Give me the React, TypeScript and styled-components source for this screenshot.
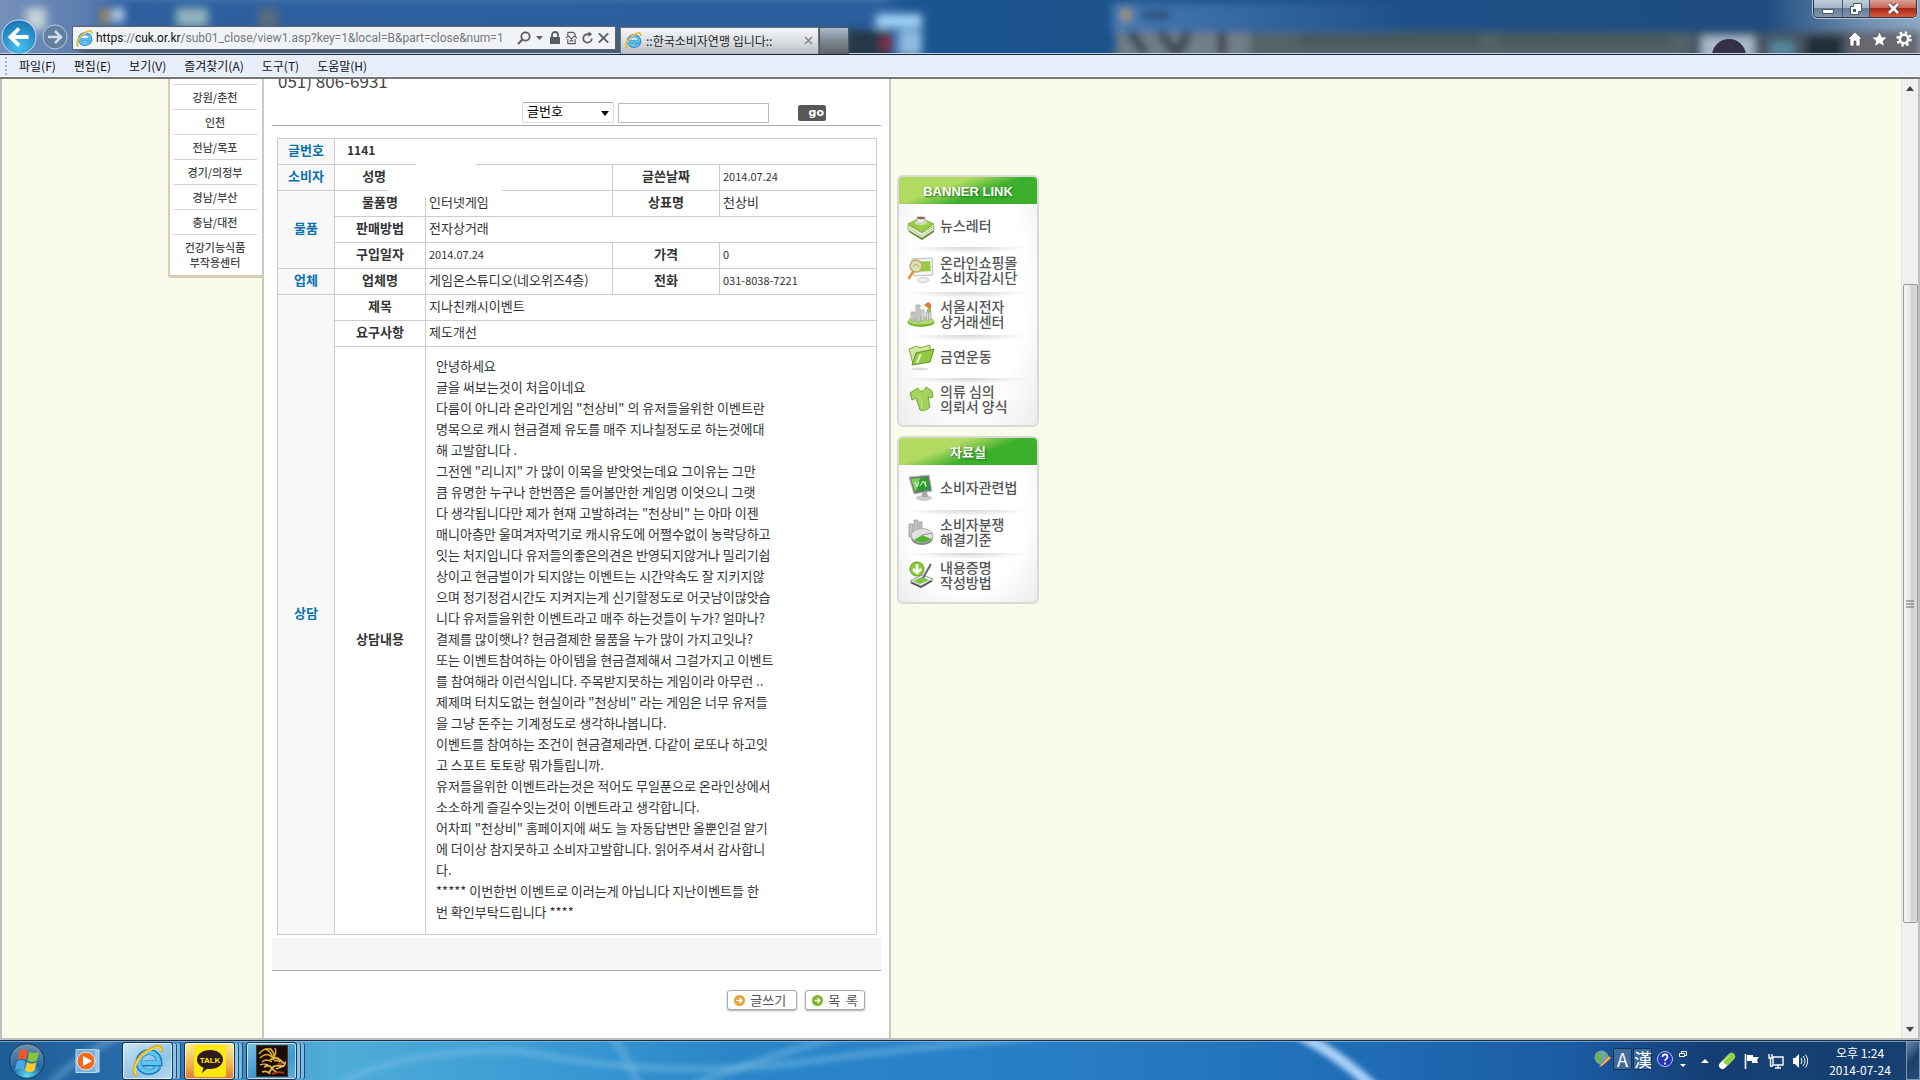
import React from "react";
import styled, { createGlobalStyle } from "styled-components";

const Global = createGlobalStyle`
  * { box-sizing: border-box; }
  body {
    margin: 0;
    overflow: hidden;
    font-family: "Noto Sans CJK KR", "Noto Sans", sans-serif;
    font-size: 13px;
    color: #333;
  }
  button, input, select { font: inherit; color: inherit; margin: 0; padding: 0; }
  button { border: 0; background: none; cursor: pointer; }
  a { color: inherit; text-decoration: none; }
`;

const Desktop = styled.div`
  display: flex;
  flex-direction: column;
  height: 100vh;
`;

/* ---------- browser frame ---------- */

const TitleBar = styled.header`
  position: relative;
  display: flex;
  align-items: flex-end;
  flex: none;
  height: 55px;
  overflow: hidden;
  background: #1f5591;
  border-bottom: 1px solid #1d2836;
  box-shadow: inset 0 -1px 0 #c5d3e2;
`;
const GlassArt = styled.svg`
  position: absolute;
  inset: 0;
  width: 100%;
  height: 53px;
`;
const NavButtons = styled.div`
  position: relative;
  display: flex;
  align-items: center;
  width: 72px;
  height: 34px;
  padding-left: 1px;
  gap: 5px;
`;
const RoundButton = styled.button<{ $size: number }>`
  flex: none;
  width: ${(p) => p.$size}px;
  height: ${(p) => p.$size}px;
  svg { display: block; width: 100%; height: 100%; }
`;
const AddressBar = styled.form`
  position: relative;
  display: flex;
  align-items: center;
  width: 544px;
  height: 24px;
  margin-bottom: 4px;
  padding: 0 5px 0 3px;
  gap: 3px;
  background: #f1f4f7;
  border: 1px solid #5a6470;
  svg { flex: none; }
`;
const Url = styled.a`
  flex: 1;
  white-space: nowrap;
  font-family: Roboto, "Liberation Sans", sans-serif;
  font-size: 12px;
  line-height: 20px;
  color: #777;
  b { font-weight: 400; color: #111; }
`;
const AddressTools = styled.span`
  display: flex;
  align-items: center;
  gap: 3px;
`;
const ToolButton = styled.button`
  display: flex;
  color: #5d5d5d;
`;
const Tab = styled.div`
  position: relative;
  display: flex;
  align-items: center;
  width: 199px;
  height: 27px;
  margin-left: 4px;
  padding: 0 5px 2px 4px;
  gap: 4px;
  font-size: 12px;
  color: #222;
  background: linear-gradient(#f4f6f8, #d6dade 60%, #b6bcc4);
  border: 1px solid #6a7480;
  border-bottom: 0;
`;
const TabTitle = styled.span`
  flex: 1;
  white-space: nowrap;
`;
const NewTab = styled.button`
  position: relative;
  width: 30px;
  height: 27px;
  background: linear-gradient(#a9bccf, #7d8791 50%, #5e6267);
  border: 1px solid #4c5560;
  border-bottom: 0;
`;
const FrameRight = styled.div`
  position: relative;
  display: flex;
  flex-direction: column;
  align-items: flex-end;
  justify-content: space-between;
  align-self: stretch;
  flex: 1;
  padding: 0 3px 7px 0;
`;
const WindowButtons = styled.div`
  display: flex;
  height: 18px;
  overflow: hidden;
  border: 1px solid #2b3646;
  border-top: 0;
  border-radius: 0 0 5px 5px;
  box-shadow: 0 0 0 1px #b7c6d6;
`;
const WindowButton = styled.button<{ $w: number; $close?: boolean }>`
  display: flex;
  align-items: center;
  justify-content: center;
  width: ${(p) => p.$w}px;
  background: ${(p) =>
    p.$close
      ? "linear-gradient(#dba396, #c9685a 45%, #a92818 50%, #d8593b)"
      : "linear-gradient(#c3cedb, #a3b3c5 45%, #647c98 50%, #8497ae)"};
  & + & { border-left: 1px solid #46566b; }
`;
const CommandIcons = styled.div`
  display: flex;
  gap: 8px;
  padding-right: 5px;
  button { display: flex; }
`;
const MenuBar = styled.nav`
  display: flex;
  align-items: center;
  flex: none;
  height: 24px;
  padding: 0 0 1px 5px;
  gap: 18px;
  font-size: 12px;
  line-height: 18px;
  color: #111;
  background: #e7eefa;
  border-bottom: 2px solid #777;
  box-shadow: inset 0 -1px 0 #f2f6fd;
`;
const Grip = styled.span`
  width: 2px;
  height: 18px;
  margin-right: -6px;
  background: repeating-linear-gradient(#a8b0bb 0 2px, transparent 2px 4px);
`;

/* ---------- page ---------- */

const Viewport = styled.div`
  display: flex;
  flex: 1;
  min-height: 0;
  overflow: hidden;
  background: #fbfbea;
  border: 2px solid #bfbfbf;
  border-top: 0;
`;
const Page = styled.div`
  display: flex;
  flex: 1;
  min-width: 0;
  overflow: hidden;
  padding-left: 166px;
`;
const Side = styled.ul`
  align-self: flex-start;
  width: 94px;
  margin: 0;
  padding: 5px 5px 0 3px;
  list-style: none;
  background: #fff;
  border: solid #d6ccb8;
  border-width: 0 0 3px 2px;
  border-radius: 0 0 0 3px;
`;
const SideItem = styled.li<{ $tall?: boolean }>`
  display: flex;
  align-items: center;
  justify-content: center;
  height: ${(p) => (p.$tall ? 41 : 25)}px;
  border-top: 1px solid #d5d5d5;
  font-size: 11px;
  font-weight: 500;
  line-height: 15px;
  text-align: center;
  color: #444;
`;
const Main = styled.main`
  width: 629px;
  background: #fff;
  border: solid #cfc8ba;
  border-width: 0 2px;
`;
const Phone = styled.div`
  display: flex;
  align-items: flex-end;
  height: 12px;
  padding-left: 14px;
  overflow: hidden;
  font-size: 17px;
  line-height: 20px;
  color: #444;
`;
const SearchForm = styled.form`
  display: flex;
  align-items: center;
  margin: 0 8px;
  padding: 11px 0 2px 250px;
  gap: 4px;
  border-bottom: 1px solid #aaa;
`;
const SelectWrap = styled.div`
  position: relative;
  svg { position: absolute; right: 5px; top: 9px; pointer-events: none; }
`;
const Select = styled.select`
  appearance: none;
  display: block;
  width: 92px;
  height: 21px;
  padding: 0 4px 3px;
  line-height: 16px;
  color: #000;
  background: #fff;
  border: 1px solid #d8dce6;
  border-top-color: #a5a8b4;
  border-radius: 2px;
`;
const SearchInput = styled.input`
  width: 151px;
  height: 20px;
  background: #fff;
  border: 1px solid #bbb;
`;
const GoButton = styled.button`
  width: 28px;
  height: 16px;
  margin-left: 25px;
  padding-right: 2px;
  font-family: "DejaVu Sans", sans-serif;
  font-size: 11px;
  font-weight: 700;
  line-height: 16px;
  text-align: right;
  color: #fff;
  background: #585858;
  border-radius: 2px;
`;
const TableWrap = styled.div`
  position: relative;
  margin: 12px 11px 3px 13px;
`;
const Table = styled.table`
  width: 600px;
  table-layout: fixed;
  border-collapse: collapse;
  th, td {
    height: 26px;
    padding: 0 3px 3px;
    border: 1px solid #ccc;
    line-height: 18px;
  }
  td { text-align: left; }
`;
const Group = styled.th`
  color: #0b72ae;
  background: #f8f8f8;
`;
const Num = styled.td`
  font-size: 11px;
`;
const PostNo = styled.td`
  && { padding-left: 12px; }
  font-size: 12px;
  font-weight: 700;
`;
const Body = styled.td`
  && {
    height: 588px;
    padding: 8px 10px;
    vertical-align: top;
    line-height: 21px;
    white-space: pre;
  }
`;
const Blank = styled.span<{ $x: number; $y: number; $w: number; $h: number }>`
  position: absolute;
  left: ${(p) => p.$x}px;
  top: ${(p) => p.$y}px;
  width: ${(p) => p.$w}px;
  height: ${(p) => p.$h}px;
  background: #fff;
`;
const Band = styled.div`
  height: 33px;
  margin: 0 8px;
  background: #f5f5f5;
  border-bottom: 1px solid #aaa;
`;
const Actions = styled.div`
  display: flex;
  justify-content: flex-end;
  gap: 8px;
  padding: 19px 24px 0 0;
`;
const ActionButton = styled.button`
  display: flex;
  align-items: center;
  height: 20px;
  padding: 0 10px 0 6px;
  gap: 5px;
  font-size: 13px;
  line-height: 18px;
  color: #555;
  background: #fff;
  border: 1px solid #aaa;
  border-radius: 3px;
  box-shadow: 0 1px 2px #aaa;
  & + & { padding-right: 6px; word-break: keep-all; }
`;

const Banners = styled.aside`
  display: flex;
  flex-direction: column;
  gap: 9px;
  width: 142px;
  margin-left: 6px;
  padding-top: 96px;
`;
const Panel = styled.section`
  padding-bottom: 6px;
  background: radial-gradient(ellipse at 50% 45%, #fff 60%, #ececec);
  border: 2px solid #d9d9d9;
  border-radius: 6px;
  overflow: hidden;
`;
const PanelTitle = styled.h2`
  height: 27px;
  margin: 0;
  font-family: "Liberation Sans", "Noto Sans CJK KR", sans-serif;
  font-size: 13px;
  line-height: 30px;
  text-align: center;
  color: #fff;
  text-shadow: 1px 1px 2px #1e6e1a;
  background: linear-gradient(160deg, #b0da60 35%, #3bb02c 60%);
`;
const PanelLink = styled.a<{ $h: number }>`
  display: flex;
  align-items: center;
  height: ${(p) => p.$h}px;
  padding-left: 8px;
  gap: 5px;
  font-size: 14px;
  font-weight: 500;
  line-height: 15px;
  white-space: pre;
  color: #555;
  & + & {
    background: radial-gradient(ellipse 60px 6px at 50% 0, #d4d4d4, transparent);
  }
`;

const ScrollBar = styled.div`
  display: flex;
  flex-direction: column;
  align-items: center;
  width: 17px;
  background: #f0f0f0;
  border-left: 1px solid #e2e2e2;
`;
const ScrollArrow = styled.button`
  display: flex;
  align-items: center;
  justify-content: center;
  width: 16px;
  height: 18px;
`;
const Track = styled.div`
  flex: 1;
  width: 15px;
  padding: 187px 0 97px;
`;
const Thumb = styled.div`
  display: flex;
  align-items: center;
  justify-content: center;
  height: 100%;
  background: linear-gradient(90deg, #f5f5f5, #e6e6e6 50%, #cfcfcf 55%, #dcdcdc);
  border: 1px solid #999;
  border-radius: 2px;
`;

/* ---------- taskbar ---------- */

const Taskbar = styled.footer`
  position: relative;
  display: flex;
  align-items: center;
  flex: none;
  height: 40px;
  overflow: hidden;
  border-top: 1px solid #1c2e45;
  background: linear-gradient(90deg, #1d5d96, #2b6fb0 8%, #4fadd8 17%, #3f9fd5 26%, #2a86c8 38%, #287ec6 55%, #1f6bb4 72%, #1a5ba2 82%, #153e74 89%, #17406f);
`;
const BarArt = styled.svg`
  position: absolute;
  inset: 0;
  width: 100%;
  height: 100%;
`;
const StartButton = styled.button`
  position: relative;
  display: flex;
  margin-left: 9px;
`;
const PinButton = styled.button`
  position: relative;
  display: flex;
  margin: 0 19px 0 30px;
`;
const TaskButton = styled.button<{ $bg: string }>`
  position: relative;
  display: flex;
  align-items: center;
  justify-content: center;
  width: 51px;
  height: 38px;
  margin-right: 11px;
  background: ${(p) => p.$bg};
  border: 1px solid #16314d;
  border-radius: 3px;
  box-shadow: inset 0 0 0 1px #ffffffaa, 4px 0 0 -1px #8ac4e6, 5px 0 0 -1px #1e4a70, 8px 0 0 -1px #7db8de, 9px 0 0 -1px #1e4a70;
`;
const Tray = styled.div`
  position: relative;
  display: flex;
  align-items: center;
  gap: 8px;
  margin-left: auto;
  color: #fff;
  svg { display: block; }
`;
const Ime = styled.div`
  display: flex;
  align-items: center;
  gap: 1px;
  margin-bottom: 4px;
`;
const ImeKey = styled.button`
  width: 19px;
  height: 22px;
  font-size: 18px;
  line-height: 20px;
  color: #fff;
  background: #3f6b9c;
  border: 1px solid #16304f;
  border-radius: 2px;
`;
const Clock = styled.time`
  width: 76px;
  margin-left: 6px;
  font-size: 12px;
  line-height: 17px;
  text-align: center;
`;
const ShowDesktop = styled.button`
  position: relative;
  align-self: stretch;
  width: 14px;
  height: 39px;
  background: linear-gradient(135deg, #6b89aa, #1b3d68 50%, #2b4f7c);
  border: 1px solid #7d98b5;
`;

/* ---------- drawings ---------- */

const IeLogo = ({ size }: { size: number }) => (
  <svg width={size} height={size} viewBox="0 0 32 32" fill="none" aria-hidden>
    <path d="M26.500 21.500c-1.700 3.500-5 5.500-9.500 5.500-6 0-10.500-4-10.500-9.700S11 7 17 7s10.500 4.500 10.500 11.500H10" stroke="#1878bd" strokeWidth="6" />
    <path d="M26 21.500c-1.500 3.200-4.700 5-9 5-5.700 0-10-3.800-10-9.200S11.300 7.500 17 7.500s9.700 4 10 10.500H10" stroke="#5cc4ee" strokeWidth="4" />
    <path d="M4 30C-1 25 5 12 15 6S29 0 29.500 6" stroke="#e6a814" strokeWidth="3" strokeLinecap="round" />
    <path d="M4 29C0 24 6 12 15.500 6.500S28.500 1 29 5.500" stroke="#ffd94a" strokeWidth="1.400" strokeLinecap="round" />
  </svg>
);

const Glass = () => (
  <GlassArt viewBox="0 0 1920 53" preserveAspectRatio="none" aria-hidden>
    <defs>
      <filter id="soft" x="-20%" y="-50%" width="140%" height="200%"><feGaussianBlur stdDeviation="4" /></filter>
      <linearGradient id="sky" x1="0" x2="1">
        <stop offset="0" stopColor="#7590ba" /><stop offset="0.045" stopColor="#5c7db0" />
        <stop offset="0.06" stopColor="#2d5f9f" /><stop offset="0.46" stopColor="#2a5e9e" />
        <stop offset="0.475" stopColor="#1b5490" /><stop offset="0.92" stopColor="#1f4c80" />
        <stop offset="0.97" stopColor="#7090b0" /><stop offset="1" stopColor="#8fa9c2" />
      </linearGradient>
      <linearGradient id="sheen" x1="0" x2="0" y1="0" y2="1">
        <stop offset="0" stopColor="#7aa9d8" /><stop offset="0.300" stopColor="#7aa9d8" stopOpacity="0" />
      </linearGradient>
      <linearGradient id="win" x1="0" x2="1">
        <stop offset="0" stopColor="#467ab3" /><stop offset="1" stopColor="#467ab3" stopOpacity="0" />
      </linearGradient>
    </defs>
    <rect width="1920" height="53" fill="url(#sky)" />
    <g filter="url(#soft)">
      <rect x="94" y="-12" width="794" height="46" fill="url(#sheen)" />
      <rect x="1112" y="3" width="300" height="29" fill="url(#win)" />
      <rect x="26" y="8" width="20" height="22" fill="#c4d1d8" />
      <rect x="100" y="8" width="10" height="16" fill="#a08760" />
      <rect x="112" y="8" width="12" height="14" fill="#b8cfe8" />
      <rect x="176" y="8" width="32" height="18" fill="#91b5bc" />
      <rect x="258" y="8" width="20" height="20" fill="#5c6c80" />
      <rect x="80" y="30" width="800" height="30" fill="#485e70" />
      <rect x="846" y="30" width="44" height="30" fill="#26384a" />
      <rect x="882" y="36" width="10" height="14" fill="#8c2b42" />
      <rect x="876" y="14" width="46" height="14" fill="#a2d2f5" />
      <rect x="898" y="30" width="24" height="26" fill="#8fbbe0" />
      <rect x="1122" y="9" width="8" height="12" fill="#b69c50" />
      <rect x="1142" y="10" width="28" height="10" fill="#2b5078" />
      <rect x="1116" y="32" width="150" height="30" fill="#727e88" />
      <path d="M1130 32l16 22M1160 32l16 22M1188 32l-10 22M1222 32v24" stroke="#2b3844" strokeWidth="8" />
      <rect x="1250" y="32" width="440" height="30" fill="#526468" />
      <path d="M1300 40h180M1500 40h170" stroke="#46545a" strokeWidth="10" />
      <rect x="1690" y="32" width="230" height="30" fill="#4a5563" />
      <rect x="1702" y="36" width="52" height="24" fill="#a9bccb" />
      <rect x="1770" y="42" width="24" height="14" fill="#528ba0" />
      <rect x="1806" y="36" width="36" height="24" fill="#242d38" />
      <rect x="1850" y="34" width="70" height="24" fill="#68686f" />
    </g>
    <circle cx="1729" cy="56" r="17" fill="#1e1730" fillOpacity=".85" />
  </GlassArt>
);

const BackIcon = () => (
  <svg viewBox="0 0 38 38" aria-hidden>
    <defs><radialGradient id="bk" cx=".5" cy=".8" r=".8"><stop offset="0" stopColor="#49c0ef" /><stop offset="1" stopColor="#1674b4" /></radialGradient></defs>
    <circle cx="19" cy="19" r="18" fill="url(#bk)" stroke="#d5e6f3" />
    <path d="M29 19H11M19 10l-9 9 9 9" stroke="#fff" strokeWidth="4" fill="none" />
  </svg>
);
const ForwardIcon = () => (
  <svg viewBox="0 0 26 26" aria-hidden>
    <circle cx="13" cy="13" r="12" fill="#64809f" stroke="#b8c8d8" />
    <path d="M6 13h13M13 7l6 6-6 6" stroke="#d3dde7" strokeWidth="2.500" fill="none" />
  </svg>
);

const NewsIcon = () => (
  <svg width="28" height="28" viewBox="0 0 28 28" aria-hidden>
    <path d="M1 17l14 9 12-8v2l-12 8L2 20z" fill="#5f7f34" />
    <path d="M1 13l14 8 12-7v4l-12 8-14-8z" fill="#eef4e0" stroke="#7fae3a" strokeWidth=".800" />
    <path d="M2 16l13 8 12-8" stroke="#9aa78a" strokeWidth=".700" fill="none" />
    <path d="M1 12l12-6 14 6-12 8z" fill="#9ad044" stroke="#6f9f2f" strokeWidth=".800" />
    <ellipse cx="14" cy="10.500" rx="6" ry="2.500" fill="#d9e3c6" />
    <path d="M9.500 6q0 5 4.500 5t4.500-5z" fill="#f6f6f1" stroke="#aaa" strokeWidth=".600" /><ellipse cx="14" cy="6" rx="4.500" ry="1.800" fill="#8a6a4a" stroke="#ddd" />
  </svg>
);
const ShopIcon = () => (
  <svg width="28" height="28" viewBox="0 0 28 28" aria-hidden>
    <path d="M5 3l20-1 1 17-19 1z" fill="#f5f5f5" stroke="#bbb" /><path d="M8 6l15-1 1 10-15 1z" fill="#98cd42" />
    <circle cx="9" cy="10" r="6" fill="#cfe8b4" stroke="#d3a56c" strokeWidth="1.500" /><path d="M6 11q3-5 6 0" stroke="#e0903c" fill="none" /><path d="M6 16l-4 6" stroke="#e0903c" strokeWidth="2.500" strokeLinecap="round" />
    <ellipse cx="16" cy="24" rx="6" ry="2.500" fill="#eee" stroke="#ccc" />
  </svg>
);
const CityIcon = () => (
  <svg width="28" height="28" viewBox="0 0 28 28" aria-hidden>
    <ellipse cx="14" cy="22" rx="13.500" ry="5" fill="#7db637" /><ellipse cx="14" cy="20.500" rx="13" ry="4" fill="#b2dc6c" />
    <path d="M4 12h4v9H4zM9 5h4v17H9zM14 10h3v11h-3zM19 12h5v8h-5z" fill="#dadada" stroke="#999" strokeWidth=".700" />
    <path d="M6 12v9M11 5v17M21.500 12v8" stroke="#aaa" /><path d="M17 5l4-3 3 2v7l-3-3z" fill="#e8773a" /><path d="M20 9h4v3h-4z" fill="#8cc63c" />
  </svg>
);
const FolderIcon = () => (
  <svg width="28" height="28" viewBox="0 0 28 28" aria-hidden>
    <ellipse cx="13" cy="26" rx="9" ry="1.500" fill="#ddd" /><path d="M2 6l8-3 3 2 10-3v15L6 21z" fill="#cfe89e" stroke="#7fae3a" />
    <path d="M9 10l18-4-4 13-18 3z" fill="#92ca42" stroke="#5f9426" /><path d="M12 12l3-1-4 9H9z" fill="#eef7dc" />
  </svg>
);
const ShirtIcon = () => (
  <svg width="28" height="28" viewBox="0 0 28 28" aria-hidden>
    <path d="M3 8l8-5c2 3 6 3 8-1l6 4 1 6-4 1-1-1 2 10c-4 4-7 4-10 3L9 13l-4 2z" fill="#a3d35c" stroke="#71a637" />
    <path d="M11 3c1 5 7 4 8-1" fill="#e9f5d6" stroke="#71a637" /><path d="M12 12c3 3 3 7 3 11" stroke="#c9e89b" fill="none" />
  </svg>
);
const MonitorIcon = () => (
  <svg width="28" height="28" viewBox="0 0 28 28" aria-hidden>
    <ellipse cx="17" cy="24" rx="8" ry="3" fill="#ccc" /><path d="M15 18h5l1 5h-6z" fill="#aaa" />
    <path d="M2 3l20-2 3 16-18 3z" fill="#777" stroke="#bbb" /><path d="M4 5l17-2 2 12-15 3z" fill="#2f9d33" /><path d="M4 5l9-1-4 13H8z" fill="#7fd25b" />
    <path d="M8 8l2 5 2-5M13 12l3-5 3 5M18 7l1 6" stroke="#e3f8d6" fill="none" />
  </svg>
);
const ChartIcon = () => (
  <svg width="28" height="28" viewBox="0 0 28 28" aria-hidden>
    <path d="M2 6h4v13H2zM7 2h4v14H7zM12 4h3v11h-3z" fill="#c4c4c4" stroke="#888" strokeWidth=".600" />
    <ellipse cx="15" cy="20" rx="11" ry="7" fill="#888" /><ellipse cx="15" cy="17.500" rx="11" ry="7" fill="#e2e2e2" stroke="#aaa" />
    <path d="M15 17l9 4c-4 4-12 4-17 1z" fill="#4db52f" /><path d="M15 17l10-2" stroke="#999" />
  </svg>
);
const CertIcon = () => (
  <svg width="28" height="28" viewBox="0 0 28 28" aria-hidden>
    <path d="M3 22l12-6 11 4-12 7z" fill="#444" /><path d="M3 20l12-6 11 4-12 7z" fill="#eee" stroke="#999" /><path d="M6 20l9-4 7 3-9 4z" fill="#7ec544" />
    <circle cx="10" cy="8" r="7" fill="#8ccf3b" stroke="#5a9b21" /><path d="M10 3.500v8M6 8l4 4 4-4" stroke="#fff" strokeWidth="2.500" fill="none" />
    <path d="M24 3l-8 14" stroke="#666" strokeWidth="2" />
  </svg>
);
const ArrowDot = ({ color }: { color: string }) => (
  <svg width="11" height="11" viewBox="0 0 11 11" aria-hidden>
    <circle cx="5.500" cy="5.500" r="5.500" fill={color} /><path d="M2.500 5.500h5M5.500 3l2.500 2.500L5.500 8" stroke="#fff" strokeWidth="1.300" fill="none" />
  </svg>
);

const regions = ["강원/춘천", "인천", "전남/목포", "경기/의정부", "경남/부산", "충남/대전"];
const menus = ["파일(F)", "편집(E)", "보기(V)", "즐겨찾기(A)", "도구(T)", "도움말(H)"];
const links = [
  { icon: <NewsIcon />, text: "뉴스레터", h: 43 },
  { icon: <ShopIcon />, text: "온라인쇼핑몰\n소비자감시단", h: 45 },
  { icon: <CityIcon />, text: "서울시전자\n상거래센터", h: 43 },
  { icon: <FolderIcon />, text: "금연운동", h: 43 },
  { icon: <ShirtIcon />, text: "의류 심의\n의뢰서 양식", h: 41 },
];
const library = [
  { icon: <MonitorIcon />, text: "소비자관련법", h: 45 },
  { icon: <ChartIcon />, text: "소비자분쟁\n해결기준", h: 43 },
  { icon: <CertIcon />, text: "내용증명\n작성방법", h: 43 },
];
const story = `안녕하세요
글을 써보는것이 처음이네요
다름이 아니라 온라인게임 "천상비" 의 유저들을위한 이벤트란
명목으로 캐시 현금결제 유도를 매주 지나칠정도로 하는것에대
해 고발합니다 .
그전엔 "리니지" 가 많이 이목을 받앗엇는데요 그이유는 그만
큼 유명한 누구나 한번쯤은 들어볼만한 게임명 이엇으니 그랫
다 생각됩니다만 제가 현재 고발하려는 "천상비" 는 아마 이젠
매니아층만 울며겨자먹기로 캐시유도에 어쩔수없이 농락당하고
잇는 처지입니다 유저들의좋은의견은 반영되지않거나 밀리기쉽
상이고 현금벌이가 되지않는 이벤트는 시간약속도 잘 지키지않
으며 정기정검시간도 지켜지는게 신기할정도로 어긋남이많앗습
니다 유저들을위한 이벤트라고 매주 하는것들이 누가? 얼마나?
결제를 많이햇나? 현금결제한 물품을 누가 많이 가지고잇나?
또는 이벤트참여하는 아이템을 현금결제해서 그걸가지고 이벤트
를 참여해라 이런식입니다. 주목받지못하는 게임이라 아무런 ..
제제며 터치도없는 현실이라 "천상비" 라는 게임은 너무 유저들
을 그냥 돈주는 기계정도로 생각하나봅니다.
이벤트를 참여하는 조건이 현금결제라면. 다같이 로또나 하고잇
고 스포트 토토랑 뭐가틀립니까.
유저들을위한 이벤트라는것은 적어도 무일푼으로 온라인상에서
소소하게 즐길수잇는것이 이벤트라고 생각합니다.
어차피 "천상비" 홈페이지에 써도 늘 자동답변만 올뿐인걸 알기
에 더이상 참지못하고 소비자고발합니다. 읽어주셔서 감사합니
다.
***** 이번한번 이벤트로 이러는게 아닙니다 지난이벤트들 한
번 확인부탁드립니다 ****`;

const stay = (e: React.FormEvent) => e.preventDefault();

function Frame() {
  return (
    <>
      <TitleBar>
        <Glass />
        <NavButtons>
          <RoundButton $size={36} aria-label="뒤로"><BackIcon /></RoundButton>
          <RoundButton $size={26} aria-label="앞으로"><ForwardIcon /></RoundButton>
        </NavButtons>
        <AddressBar onSubmit={stay}>
          <IeLogo size={17} />
          <Url href="#"><b>https</b>://<b>cuk.or.kr</b>/sub01_close/view1.asp?key=1&amp;local=B&amp;part=close&amp;num=1</Url>
          <AddressTools>
            <ToolButton type="button" aria-label="검색">
              <svg width="14" height="14" viewBox="0 0 14 14"><circle cx="8.500" cy="5.500" r="4.200" fill="none" stroke="currentColor" strokeWidth="1.800" /><path d="M5.500 8.500L1 13" stroke="currentColor" strokeWidth="2.200" /></svg>
            </ToolButton>
            <ToolButton type="button" aria-label="목록 열기"><svg width="11" height="14" viewBox="0 0 11 14"><path d="M2 5h7L5.500 9z" fill="currentColor" /></svg></ToolButton>
            <ToolButton type="button" aria-label="보안"><svg width="14" height="14" viewBox="0 0 14 14"><path d="M2 6h10v7H2z" fill="currentColor" /><path d="M4 7V4a3 3 0 016 0v3" fill="none" stroke="currentColor" strokeWidth="1.800" /></svg></ToolButton>
            <ToolButton type="button" aria-label="호환성 보기"><svg width="13" height="14" viewBox="0 0 14 14"><path d="M3 6V1h6l2 2v3M3 8v5h8V8M1 7l3-2 3 3 3-3 3 2M5 11l2-2 2 2" fill="none" stroke="currentColor" strokeWidth="1.200" /></svg></ToolButton>
            <ToolButton type="button" aria-label="새로 고침"><svg width="13" height="14" viewBox="0 0 14 14"><path d="M11.500 7.500A4.500 4.500 0 117 3h2" fill="none" stroke="currentColor" strokeWidth="2" /><path d="M8 0l4 3-4 3z" fill="currentColor" /></svg></ToolButton>
            <ToolButton type="button" aria-label="중지"><svg width="13" height="14" viewBox="0 0 14 14"><path d="M2 2l10 10M12 2L2 12" stroke="currentColor" strokeWidth="2" /></svg></ToolButton>
          </AddressTools>
        </AddressBar>
        <Tab>
          <IeLogo size={17} />
          <TabTitle>::한국소비자연맹 입니다::</TabTitle>
          <ToolButton aria-label="탭 닫기"><svg width="9" height="9" viewBox="0 0 9 9"><path d="M1 1l7 7M8 1L1 8" stroke="#888" strokeWidth="1.600" /></svg></ToolButton>
        </Tab>
        <NewTab aria-label="새 탭" />
        <FrameRight>
          <WindowButtons>
            <WindowButton $w={28} aria-label="최소화"><svg width="12" height="12" viewBox="0 0 12 12"><rect x="0.500" y="6.500" width="11" height="4" fill="#fff" stroke="#4b5666" /></svg></WindowButton>
            <WindowButton $w={27} aria-label="이전 크기로"><svg width="12" height="12" viewBox="0 0 12 12"><path d="M3.500.500h8v8h-3v3h-8v-8h3z" fill="#fff" stroke="#4b5666" /><path d="M3 6h3v3H3z" fill="#4b5666" /></svg></WindowButton>
            <WindowButton $w={47} $close aria-label="닫기"><svg width="13" height="11" viewBox="0 0 13 11"><path d="M2 1l9 9M11 1l-9 9" stroke="#5b3a3a" strokeWidth="4.500" /><path d="M2 1l9 9M11 1l-9 9" stroke="#fff" strokeWidth="2.700" /></svg></WindowButton>
          </WindowButtons>
          <CommandIcons>
            <button aria-label="홈"><svg width="16" height="16" viewBox="0 0 16 16"><path d="M8 1L1 8h2v7h4v-5h2v5h4V8h2z" fill="#fff" stroke="#444" strokeWidth=".600" /></svg></button>
            <button aria-label="즐겨찾기"><svg width="17" height="16" viewBox="0 0 17 16"><path d="M8.500.500l2.300 5.300 5.700.500-4.300 3.700 1.300 5.500-5-3-5 3 1.300-5.500L.500 6.300l5.700-.500z" fill="#fff" stroke="#444" strokeWidth=".600" /></svg></button>
            <button aria-label="도구"><svg width="16" height="16" viewBox="0 0 16 16"><circle cx="8" cy="8" r="4.200" fill="none" stroke="#fff" strokeWidth="2.600" /><circle cx="8" cy="8" r="6.500" fill="none" stroke="#fff" strokeWidth="2.500" strokeDasharray="2.500 2.600" /></svg></button>
          </CommandIcons>
        </FrameRight>
      </TitleBar>
      <MenuBar>
        <Grip />
        {menus.map((m) => <a href="#" key={m}>{m}</a>)}
      </MenuBar>
    </>
  );
}

function PostTable() {
  return (
    <TableWrap>
      <Table>
        <colgroup>
          <col style={{ width: 57 }} /><col style={{ width: 91 }} /><col style={{ width: 187 }} /><col style={{ width: 107 }} /><col />
        </colgroup>
        <tbody>
          <tr><Group>글번호</Group><PostNo colSpan={4}>1141</PostNo></tr>
          <tr><Group>소비자</Group><th>성명&nbsp;&nbsp;&nbsp;&nbsp;</th><td /><th>글쓴날짜</th><Num>2014.07.24</Num></tr>
          <tr><Group rowSpan={3}>물품</Group><th>물품명</th><td>인터넷게임</td><th>상표명</th><td>천상비</td></tr>
          <tr><th>판매방법</th><td colSpan={3}>전자상거래</td></tr>
          <tr><th>구입일자</th><Num>2014.07.24</Num><th>가격</th><Num>0</Num></tr>
          <tr><Group>업체</Group><th>업체명</th><td>게임온스튜디오(네오위즈4층)</td><th>전화</th><Num>031-8038-7221</Num></tr>
          <tr><Group rowSpan={3}>상담</Group><th>제목</th><td colSpan={3}>지나친캐시이벤트</td></tr>
          <tr><th>요구사항</th><td colSpan={3}>제도개선</td></tr>
          <tr><th>상담내용</th><Body colSpan={3}>{story}</Body></tr>
        </tbody>
      </Table>
      <Blank $x={139} $y={24} $w={60} $h={30} />
      <Blank $x={112} $y={51} $w={113} $h={3} />
      <Blank $x={142} $y={52} $w={83} $h={7} />
    </TableWrap>
  );
}

function Taskbars() {
  return (
    <Taskbar>
      <BarArt viewBox="0 0 1920 40" preserveAspectRatio="none" aria-hidden>
        <defs><filter id="glow" x="-30%" y="-30%" width="160%" height="160%"><feGaussianBlur stdDeviation="3" /></filter></defs>
        <g filter="url(#glow)" fill="none">
          <path d="M1300-6q40 20 76 56" stroke="#a9d0f8" strokeWidth="11" />
          <path d="M340 44q60-36 180-34 140 30 280 12 100-14 230-26" stroke="#7dc0e8" strokeOpacity=".4" strokeWidth="8" />
          <path d="M612-4q16 20 26 50M840-4q-70 18-150 50M120-6q-40 20-70 50" stroke="#8cc6ea" strokeOpacity=".35" strokeWidth="8" />
        </g>
        <path d="M0 .500h1920" stroke="#9cc2e2" strokeOpacity=".7" />
      </BarArt>
      <StartButton aria-label="시작">
        <svg width="36" height="36" viewBox="0 0 36 36">
          <defs><radialGradient id="orb" cx=".5" cy=".95" r=".9"><stop offset="0" stopColor="#5fe0f5" /><stop offset=".5" stopColor="#1d6ba8" /><stop offset="1" stopColor="#6f8ea8" /></radialGradient></defs>
          <circle cx="18" cy="18" r="17.300" fill="url(#orb)" stroke="#17324e" />
          <path d="M10.500 8c3-2 5.500-2 8.500 0l-2 9c-3-2-5.500-2-8.500 0z" fill="#f0582a" /><path d="M20.500 8.500c3 2 6 2 9.500 0l-2 9c-3.500 2-6 2-9.500 0z" fill="#8ac43a" />
          <path d="M8 18.500c3-2 5.500-2 8.500 0l-2 8.500c-3-2-5.500-2-8.500 0z" fill="#4aa6e8" /><path d="M18 19c3 2 6 2 9.500 0l-2 8.500c-3.500 2-6 2-9.500 0z" fill="#fbcb2c" />
        </svg>
      </StartButton>
      <PinButton aria-label="미디어 플레이어">
        <svg width="28" height="24" viewBox="0 0 28 24">
          <rect x="6" y="1" width="18" height="22" fill="#8cc0e6" stroke="#cde6f7" /><rect x="1" y="0.500" width="20" height="23" fill="#7ab2de" stroke="#b6dcf3" />
          <circle cx="11" cy="12" r="9" fill="#f26a1c" stroke="#fff" strokeWidth=".800" /><path d="M8 7l9 5-9 5z" fill="#fff" />
        </svg>
      </PinButton>
      <TaskButton $bg="linear-gradient(150deg, #cde5f5, #8fc3e6 60%, #b3dcf2)" aria-label="인터넷 익스플로러"><IeLogo size={32} /></TaskButton>
      <TaskButton $bg="linear-gradient(#f6ee9a, #f2b34a 60%, #d9793a)" aria-label="카카오톡">
        <svg width="32" height="32" viewBox="0 0 32 32">
          <rect width="32" height="32" rx="2" fill="#ffe812" /><path d="M16 5c7.500 0 13 4 13 9.500S23.500 24 16 24c-1 0-2 0-3-.200L8 28l1.500-5.300C5.500 21 3 18 3 14.500 3 9 8.500 5 16 5z" fill="#2f1b1b" />
          <text x="16" y="18" textAnchor="middle" fontFamily="Liberation Sans" fontSize="8" fontWeight="700" fill="#ffe812">TALK</text>
        </svg>
      </TaskButton>
      <TaskButton $bg="linear-gradient(150deg, #7cc3e8, #3f97cb 60%, #5fb3dd)" aria-label="게임">
        <svg width="32" height="32" viewBox="0 0 32 32" fill="none">
          <rect x=".5" y=".5" width="31" height="31" fill="#1c0b05" stroke="#4d3510" />
          <path d="M3 9q5-6 10-5t6 9M4 13q5-5 9-3t5 5M6 17q4-4 10 0M9 4q6 2 8 9M14 3q4 4 4 9M19 3q2 4-1 9" stroke="#d9a82c" strokeWidth="1.500" />
          <path d="M14 15q6-4 10 0t5 3q0 4-5 3t-7 1-4 6M8 22q5-3 8 1t5 4M6 27q5-2 8 2" stroke="#e3b83a" strokeWidth="1.800" />
          <path d="M18 16q4-1 6 1M4 20q4-2 8 0M20 24l8-3" stroke="#f9e88a" strokeWidth="1.200" /><path d="M16 29q6-3 12-1M22 19h4" stroke="#a83818" strokeWidth="2" />
        </svg>
      </TaskButton>
      <Tray>
        <Ime>
          <svg width="18" height="18" viewBox="0 0 18 18"><circle cx="7.500" cy="7.500" r="7" fill="#6fa3cf" /><path d="M2 4c3-3 6-1 5 1s3 3 1 5-3 4-4 3S0 8 2 4zM10 2c3 1 4 4 4 7l-3-2z" fill="#6fb04a" /><path d="M6 15l9-9 2 2-9 8-3 1z" fill="#f2bf4a" stroke="#855" strokeWidth=".600" /></svg>
          <ImeKey>A</ImeKey><ImeKey>漢</ImeKey>
          <svg width="22" height="18" viewBox="0 0 22 18"><circle cx="12" cy="9" r="7.500" fill="#2434b8" stroke="#b8c4ee" /><path d="M9.500 7c0-3.500 5-3.500 5 0 0 2-2.500 1.800-2.500 4M12 12.500v2" stroke="#fff" strokeWidth="1.700" fill="none" /></svg>
          <svg width="16" height="18" viewBox="0 0 16 18"><path d="M5.500 4V1.500h5v4H9M3.500 3.500h5v3h-5z" fill="none" stroke="#fff" /><path d="M4 14h6l-3 3z" fill="#fff" /></svg>
        </Ime>
        <svg width="10" height="6" viewBox="0 0 10 6"><path d="M1 5h8L5 1z" fill="#fff" /></svg>
        <svg width="18" height="18" viewBox="0 0 18 18"><path d="M4.500 13.500l9-9" stroke="#fff" strokeWidth="7" strokeLinecap="round" /><path d="M9 9l4.500-4.500" stroke="#8fd13a" strokeWidth="7" strokeLinecap="round" /><path d="M3 12l8-8" stroke="#fff" strokeOpacity=".6" /></svg>
        <svg width="16" height="16" viewBox="0 0 16 16"><path d="M1.500 1v15" stroke="#fff" strokeWidth="1.600" /><path d="M3 2h6v2h6l-2 3 1 3H8V8H3z" fill="#fff" /></svg>
        <svg width="16" height="16" viewBox="0 0 16 16" fill="none" stroke="#fff" strokeWidth="1.400"><path d="M5 4h10v8H5zM7 15h6M10 12v3M1 1v4h3V1M2.500 5v8H5" /></svg>
        <svg width="16" height="16" viewBox="0 0 16 16"><path d="M1 5h2l4-4v14l-4-4H1z" fill="#fff" /><path d="M9 5q2 3 0 6M11 3q4 5 0 10M13.500 1.500q4.500 6.500 0 13" stroke="#fff" fill="none" /></svg>
        <Clock>오후 1:24<br />2014-07-24</Clock>
        <ShowDesktop aria-label="바탕 화면 보기" />
      </Tray>
    </Taskbar>
  );
}

export default function App() {
  return (
    <Desktop>
      <Global />
      <Frame />
      <Viewport>
        <Page>
          <Side>
            {regions.map((r) => <SideItem key={r}><a href="#">{r}</a></SideItem>)}
            <SideItem $tall><a href="#">건강기능식품<br />부작용센터</a></SideItem>
          </Side>
          <Main>
            <Phone>051) 806-6931</Phone>
            <SearchForm onSubmit={stay}>
              <SelectWrap>
                <Select aria-label="검색 항목"><option>글번호</option></Select>
                <svg width="8" height="5" viewBox="0 0 8 5"><path d="M0 0h8L4 5z" fill="#000" /></svg>
              </SelectWrap>
              <SearchInput type="text" aria-label="검색어" />
              <GoButton type="submit">go</GoButton>
            </SearchForm>
            <PostTable />
            <Band />
            <Actions>
              <ActionButton><ArrowDot color="#e5a436" />글쓰기</ActionButton>
              <ActionButton><ArrowDot color="#7fb526" />목&nbsp;&nbsp;록</ActionButton>
            </Actions>
          </Main>
          <Banners>
            <Panel>
              <PanelTitle>BANNER LINK</PanelTitle>
              {links.map((l) => <PanelLink href="#" key={l.text} $h={l.h}>{l.icon}{l.text}</PanelLink>)}
            </Panel>
            <Panel>
              <PanelTitle>자료실</PanelTitle>
              {library.map((l) => <PanelLink href="#" key={l.text} $h={l.h}>{l.icon}{l.text}</PanelLink>)}
            </Panel>
          </Banners>
        </Page>
        <ScrollBar>
          <ScrollArrow aria-label="위로"><svg width="8" height="5" viewBox="0 0 8 5"><path d="M0 5h8L4 0z" fill="#444" /></svg></ScrollArrow>
          <Track><Thumb><svg width="8" height="8" viewBox="0 0 8 8"><path d="M0 1h8M0 4h8M0 7h8" stroke="#666" /></svg></Thumb></Track>
          <ScrollArrow aria-label="아래로"><svg width="8" height="5" viewBox="0 0 8 5"><path d="M0 0h8L4 5z" fill="#444" /></svg></ScrollArrow>
        </ScrollBar>
      </Viewport>
      <Taskbars />
    </Desktop>
  );
}
